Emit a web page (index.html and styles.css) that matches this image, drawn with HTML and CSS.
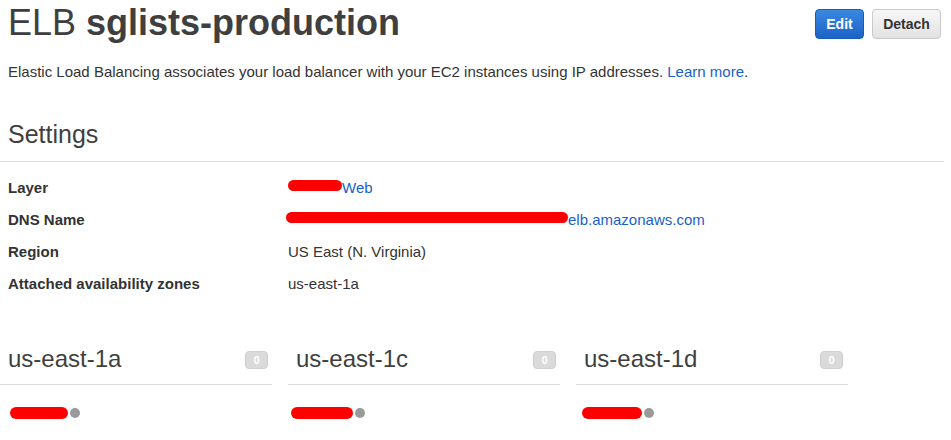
FILE: index.html
```html
<!DOCTYPE html>
<html>
<head>
<meta charset="utf-8">
<link rel="stylesheet" href="styles.css">
</head>
<body>
<div class="page">
  <header class="head">
    <h1 class="title">ELB <b>sglists-production</b></h1>
    <div class="actions">
      <button class="btn btn-primary">Edit</button>
      <button class="btn btn-default">Detach</button>
    </div>
  </header>
  <p class="desc">Elastic Load Balancing associates your load balancer with your EC2 instances using IP addresses. <a href="#">Learn more</a>.</p>

  <h2 class="section">Settings</h2>
  <dl class="props">
    <dt>Layer</dt>
    <dd><a href="#"><span class="redact r-layer"></span>Web</a></dd>
    <dt>DNS Name</dt>
    <dd><a href="#"><span class="redact r-dns"></span>elb.amazonaws.com</a></dd>
    <dt>Region</dt>
    <dd>US East (N. Virginia)</dd>
    <dt>Attached availability zones</dt>
    <dd>us-east-1a</dd>
  </dl>

  <div class="zones">
    <div class="zone">
      <div class="zone-head"><span class="zone-name">us-east-1a</span><span class="badge">0</span></div>
      <div class="zone-body"><span class="redact r-zone1"></span><span class="dot"></span></div>
    </div>
    <div class="zone">
      <div class="zone-head"><span class="zone-name">us-east-1c</span><span class="badge">0</span></div>
      <div class="zone-body"><span class="redact r-zone2"></span><span class="dot"></span></div>
    </div>
    <div class="zone">
      <div class="zone-head"><span class="zone-name">us-east-1d</span><span class="badge">0</span></div>
      <div class="zone-body"><span class="redact r-zone3"></span><span class="dot"></span></div>
    </div>
  </div>
</div>
</body>
</html>
```

FILE: styles.css
```css
* { box-sizing: border-box; }
html, body { margin: 0; padding: 0; background: #fff; }
body {
  font-family: "Liberation Sans", Arial, Helvetica, sans-serif;
  color: #333;
  font-size: 15px;
}
.page { width: 944px; }
a { color: #1a5fc9; text-decoration: none; }

.head {
  display: flex;
  justify-content: space-between;
  align-items: flex-start;
  padding: 0 3px 0 8px;
}
.title {
  margin: 0;
  font-size: 36px;
  font-weight: normal;
  line-height: 46px;
  color: #3f3f3f;
}
.title b { font-weight: bold; }
.actions { display: flex; gap: 8px; padding-top: 9px; }
.btn {
  font-family: "Liberation Sans", Arial, sans-serif;
  font-weight: bold;
  font-size: 14px;
  height: 30px;
  border-radius: 4px;
  padding: 0 8px;
  cursor: pointer;
}
.btn-primary {
  color: #fff;
  background: linear-gradient(#3a88e0, #1b63c8);
  border: 1px solid #1a5ab5;
  width: 49px;
}
.btn-default {
  color: #333;
  background: linear-gradient(#f7f7f7, #e2e2e2);
  border: 1px solid #c9c9c9;
  width: 69px;
}

.desc {
  margin: 16px 0 0;
  padding: 0 8px;
  line-height: 20px;
  color: #333;
}

.section {
  margin: 37px 0 0;
  padding: 0 8px 12px;
  font-size: 25px;
  font-weight: normal;
  line-height: 30px;
  color: #3f3f3f;
  border-bottom: 1px solid #dcdcdc;
}

.props {
  display: grid;
  grid-template-columns: 280px 1fr;
  grid-auto-rows: 32px;
  margin: 9px 0 0;
  padding: 0 8px;
  align-items: center;
}
.props dt { font-weight: bold; color: #333; }
.props dd { margin: 0; color: #333; }

.redact {
  display: inline-block;
  background: #ff0000;
  border-radius: 6px;
  height: 11px;
  vertical-align: 2px;
}
.r-layer { width: 54px; }
.r-dns { width: 282px; margin-left: -2px; }

.zones {
  display: flex;
  gap: 16px;
  margin-top: 36px;
}
.zone { width: 272px; }
.zone-head {
  display: flex;
  justify-content: space-between;
  align-items: center;
  padding: 0 4px 0 8px;
  height: 50px;
  border-bottom: 1px solid #dcdcdc;
}
.zone:nth-child(3) .zone-head { padding-right: 5px; }
.zone-name {
  font-size: 24px;
  color: #3f3f3f;
  padding-bottom: 2px;
}
.badge {
  display: inline-block;
  width: 23px;
  height: 18px;
  line-height: 16px;
  border-radius: 4px;
  background: #dadada;
  border: 1px solid #cfcfcf;
  color: #fff;
  font-size: 11px;
  font-weight: bold;
  text-align: center;
}
.zone-body {
  display: flex;
  align-items: center;
  padding: 17px 0 0 10px;
  height: 38px;
}
.zone:nth-child(2) .zone-body { padding-left: 3px; }
.zone:nth-child(3) .zone-body { padding-left: 6px; }
.r-zone1 { width: 58px; height: 12px; }
.r-zone2 { width: 62px; height: 12px; }
.r-zone3 { width: 60px; height: 12px; }
.dot {
  display: inline-block;
  width: 10px;
  height: 10px;
  border-radius: 50%;
  background: #9a9a9a;
  margin-left: 2px;
}
```
